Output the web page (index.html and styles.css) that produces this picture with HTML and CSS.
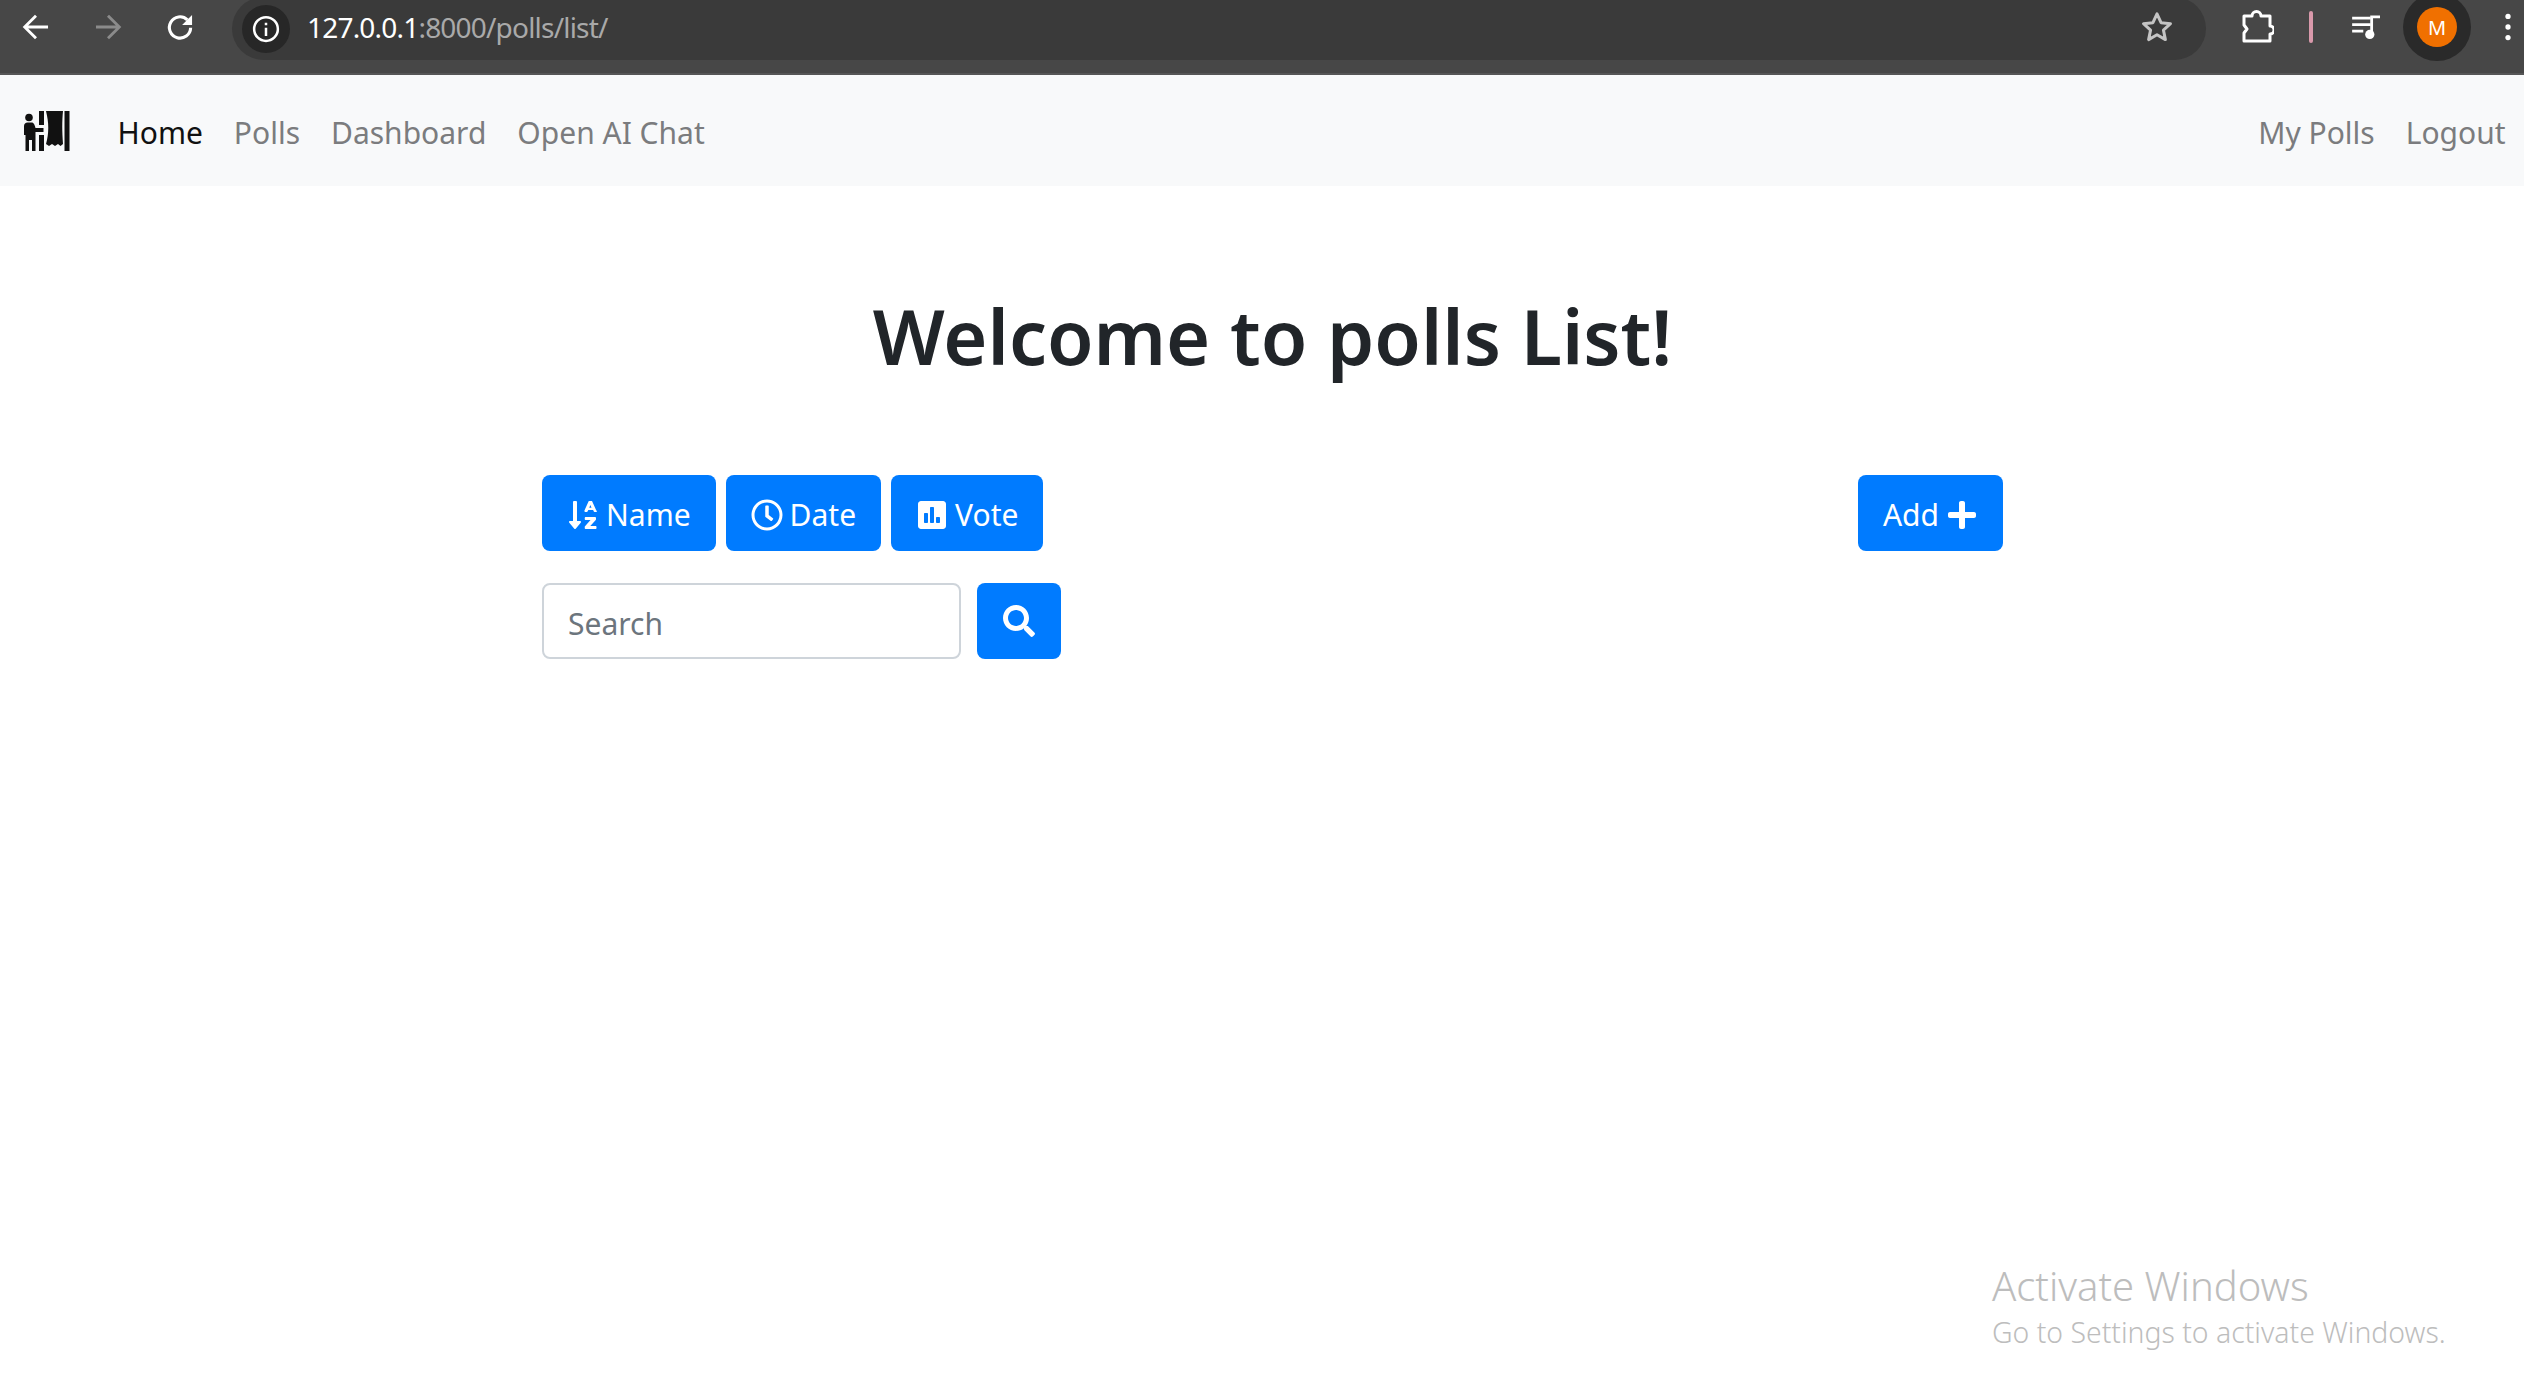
FILE: index.html
```html
<!DOCTYPE html>
<html>
<head>
	<title>Polls List</title>
	<link rel="stylesheet" href="styles.css">
</head>
<body>
	<div class="chrome">
		<div class="chrome-nav">
			<svg class="chrome-icon" viewBox="0 0 24 24"><path d="M20.500 12H4.500M12 4l-8 8 8 8" fill="none" stroke="#fff" stroke-width="2"/></svg>
			<svg class="chrome-icon" viewBox="0 0 24 24"><path d="M3.500 12h16M12 4l8 8-8 8" fill="none" stroke="#8b8b8b" stroke-width="2"/></svg>
			<svg class="chrome-icon" viewBox="0 0 24 24"><path d="M19.500 12.500a7.500 7.500 0 1 1-2.300-5.600" fill="none" stroke="#fff" stroke-width="2.200"/><path d="M20.500 3.500v7h-7z" fill="#fff"/></svg>
		</div>
		<div class="address-bar">
			<span class="site-info">
				<svg viewBox="0 0 24 24" width="30" height="30"><circle cx="12" cy="12" r="9.500" fill="none" stroke="#fff" stroke-width="2"/><path d="M11 11h2v6.500h-2zM11 7h2v2h-2z" fill="#fff"/></svg>
			</span>
			<span class="url"><span class="url-host">127.0.0.1</span>:8000/polls/list/</span>
			<svg class="star" viewBox="0 0 24 24"><path d="M12 3.200l2.700 5.900 6.300.7-4.700 4.300 1.300 6.300L12 17.200l-5.600 3.200 1.300-6.300L3 9.800l6.300-.7z" fill="none" stroke="#c4c4c4" stroke-width="2" stroke-linejoin="round"/></svg>
		</div>
		<div class="chrome-tools">
			<svg class="puzzle" viewBox="0 0 34 34"><path d="M4 6h8a4.500 4.500 0 0 1 9 0h9v10a4 4 0 0 1 0 8v7H4v-8l3-4-3-4z" fill="none" stroke="#fff" stroke-width="3" stroke-linejoin="round"/></svg>
			<span class="divider"></span>
			<svg class="queue" viewBox="0 0 34 28"><path d="M1 3h20v3H1zM1 10h20v3H1zM1 17h12v3H1z" fill="#fff"/><path d="M22 22V3h9" fill="none" stroke="#fff" stroke-width="3"/><circle cx="20" cy="22" r="5" fill="#fff"/></svg>
			<span class="avatar-ring"><span class="avatar">M</span></span>
			<svg class="dots" viewBox="0 0 8 34"><circle cx="4" cy="5" r="3" fill="#fff"/><circle cx="4" cy="17" r="3" fill="#fff"/><circle cx="4" cy="29" r="3" fill="#fff"/></svg>
		</div>
	</div>

	<nav class="navbar">
		<a class="brand" href="#">
			<svg viewBox="0 0 46 40" width="46" height="40">
				<circle cx="5" cy="6.500" r="3.800" fill="#111"/>
				<path d="M0 15c0-2 1.500-3.500 3.500-3.500h4c2 0 3 1.500 4 5.500h8v4h-8v19H8V29H5v11H1.500V24H0z" fill="#111"/>
				<path d="M15 0h5v14h-5zM15 24h5v16h-5zM40.500 0h5v40h-5z" fill="#111"/>
				<path d="M22 0h17c-1 10-1 20 0 33l-2.500 2-2.500-2-3 2-3-2-3 2-3-2c3-11 3-21 0-33z" fill="#111"/>
			</svg>
		</a>
		<div class="nav-links">
			<a class="nav-link active" href="#">Home</a>
			<a class="nav-link" href="#">Polls</a>
			<a class="nav-link" href="#">Dashboard</a>
			<a class="nav-link" href="#">Open AI Chat</a>
		</div>
		<div class="nav-links nav-right">
			<a class="nav-link" href="#">My Polls</a>
			<a class="nav-link" href="#">Logout</a>
		</div>
	</nav>

	<main class="container">
		<h1>Welcome to polls List!</h1>
		<div class="toolbar">
			<div class="sort-buttons">
				<a class="btn" href="#">
					<svg class="icon" viewBox="0 0 448 512"><path d="M176 352h-48V48a16 16 0 0 0-16-16H80a16 16 0 0 0-16 16v304H16c-14.200 0-21.400 17.200-11.300 27.300l80 96a16 16 0 0 0 22.600 0l80-96C197.400 369.300 190.200 352 176 352zM424 432H340l88-98c3-3 4-7 4-11v-19c0-8-7-16-16-16H268c-9 0-16 8-16 16v16c0 9 7 16 16 16h76l-88 98c-3 3-4 7-4 11v19c0 9 7 16 16 16h156c9 0 16-7 16-16v-16c0-9-7-16-16-16zM438 187L370 37c-3-6-8-5-14-5h-28c-6 0-11-1-14 5l-68 150c-4 10 3 21 14 21h24c7 0 13-4 15-11l9-21h78l9 21c2 7 8 11 15 11h24c11 0 18-11 14-21zM324 140l18-44 18 44z" fill="#fff" fill-rule="evenodd"/></svg>
					Name
				</a>
				<a class="btn" href="#">
					<svg class="icon" viewBox="0 0 512 512"><path d="M256 8C119 8 8 119 8 256s111 248 248 248 248-111 248-248S393 8 256 8zm0 448c-110.500 0-200-89.500-200-200S145.500 56 256 56s200 89.500 200 200-89.500 200-200 200zm61.800-104.400l-84.900-61.700c-3.100-2.300-4.900-5.900-4.900-9.700V116c0-6.600 5.400-12 12-12h32c6.600 0 12 5.400 12 12v141.700l66.800 48.600c5.400 3.900 6.500 11.400 2.600 16.800L334.600 349c-3.900 5.300-11.400 6.500-16.800 2.600z" fill="#fff"/></svg>
					Date
				</a>
				<a class="btn" href="#">
					<svg class="icon" viewBox="0 0 448 512"><path d="M400 32H48C21.500 32 0 53.500 0 80v352c0 26.500 21.500 48 48 48h352c26.500 0 48-21.500 48-48V80c0-26.500-21.500-48-48-48zM160 368c0 8.840-7.160 16-16 16h-32c-8.840 0-16-7.160-16-16V240c0-8.840 7.160-16 16-16h32c8.840 0 16 7.160 16 16v128zm96 0c0 8.840-7.160 16-16 16h-32c-8.840 0-16-7.160-16-16V144c0-8.840 7.160-16 16-16h32c8.840 0 16 7.160 16 16v224zm96 0c0 8.840-7.160 16-16 16h-32c-8.840 0-16-7.160-16-16v-64c0-8.840 7.160-16 16-16h32c8.840 0 16 7.160 16 16v64z" fill="#fff"/></svg>
					Vote
				</a>
			</div>
			<a class="btn" href="#">
				Add
				<svg class="icon" viewBox="0 0 448 512"><path d="M416 208H272V64c0-17.670-14.330-32-32-32h-32c-17.670 0-32 14.330-32 32v144H32c-17.670 0-32 14.330-32 32v32c0 17.670 14.330 32 32 32h144v144c0 17.670 14.330 32 32 32h32c17.670 0 32-14.330 32-32V304h144c17.670 0 32-14.330 32-32v-32c0-17.670-14.330-32-32-32z" fill="#fff"/></svg>
			</a>
		</div>
		<form class="search-form">
			<input class="search-input" type="text" placeholder="Search">
			<button class="btn btn-search" type="button">
				<svg class="icon" viewBox="0 0 512 512"><path d="M505 442.700L405.300 343c-4.500-4.500-10.600-7-17-7H372c27.600-35.300 44-79.700 44-128C416 93.100 322.900 0 208 0S0 93.100 0 208s93.100 208 208 208c48.300 0 92.700-16.400 128-44v16.300c0 6.400 2.500 12.500 7 17l99.700 99.700c9.400 9.400 24.600 9.400 33.900 0l28.300-28.300c9.400-9.400 9.400-24.600.1-34zM208 336c-70.700 0-128-57.200-128-128 0-70.700 57.200-128 128-128 70.700 0 128 57.200 128 128 0 70.700-57.200 128-128 128z" fill="#fff"/></svg>
			</button>
		</form>
	</main>

	<div class="activate">
		<div class="activate-title">Activate Windows</div>
		<div class="activate-sub">Go to Settings to activate Windows.</div>
	</div>
</body>
</html>
```

FILE: styles.css
```css
* {
	box-sizing: border-box;
}
html, body {
	height: 100%;
}
body {
	margin: 0;
	background: #fff;
	color: #212529;
	font-family: "Noto Sans", "Open Sans", sans-serif;
	font-size: 30px;
	overflow: hidden;
}
a {
	text-decoration: none;
}

/* browser bar */
.chrome {
	display: flex;
	align-items: flex-start;
	height: 75px;
	background: #474747;
	border-bottom: 2px solid #565656;
}
.chrome-nav {
	display: flex;
	gap: 38px;
	width: 232px;
	padding: 10px 0 0 19px;
	flex: none;
}
.chrome-icon {
	width: 34px;
	height: 34px;
}
.address-bar {
	display: flex;
	align-items: center;
	flex: none;
	width: 1974px;
	height: 63px;
	margin-top: -3px;
	padding: 0 18px 0 10px;
	background: #3a3a3a;
	border-radius: 32px;
}
.site-info {
	display: flex;
	align-items: center;
	justify-content: center;
	width: 48px;
	height: 48px;
	border-radius: 50%;
	background: #272727;
}
.url {
	margin: -3px 0 0 17px;
	font-size: 28px;
	letter-spacing: -0.8px;
	color: #a9a9a9;
}
.url-host {
	color: #fff;
}
.star {
	width: 36px;
	height: 36px;
	margin: -3px 13px 0 auto;
}
.chrome-tools {
	display: flex;
	align-items: center;
	flex: 1;
	height: 54px;
	padding-left: 34px;
}
.puzzle {
	width: 34px;
	height: 34px;
}
.divider {
	width: 4px;
	height: 32px;
	margin-left: 35px;
	background: #d999ab;
	border-radius: 2px;
}
.queue {
	width: 32px;
	height: 26px;
	margin-left: 38px;
}
.avatar-ring {
	display: flex;
	align-items: center;
	justify-content: center;
	flex: none;
	width: 68px;
	height: 68px;
	margin-left: 20px;
	border-radius: 50%;
	background: #2a2a2a;
}
.avatar {
	display: flex;
	align-items: center;
	justify-content: center;
	width: 40px;
	height: 40px;
	border-radius: 50%;
	background: #f07000;
	color: #fff;
	font-size: 20px;
}
.dots {
	width: 8px;
	height: 30px;
	margin-left: 33px;
}

/* page nav */
.navbar {
	display: flex;
	align-items: center;
	height: 111px;
	padding: 0 3px 0 24px;
	background: #f8f9fa;
}
.brand {
	display: flex;
	margin-right: 32px;
}
.nav-links {
	display: flex;
}
.nav-right {
	margin-left: auto;
}
.nav-link {
	padding: 4px 15.500px 0;
	color: #7b7c7e;
}
.nav-link.active {
	color: #111;
}

/* main */
.container {
	margin-left: 542px;
	width: 1461px;
}
h1 {
	margin: 0;
	padding-top: 100px;
	text-align: center;
	font-size: 75.600px;
	font-weight: 600;
	line-height: 100px;
}
.toolbar {
	display: flex;
	justify-content: space-between;
	margin-top: 89px;
}
.sort-buttons {
	display: flex;
	gap: 10px;
}
.btn {
	display: inline-flex;
	align-items: center;
	justify-content: center;
	gap: 7px;
	height: 76px;
	padding: 3px 25px 0;
	background: #007bff;
	border: 0;
	border-radius: 8px;
	color: #fff;
	font-family: inherit;
	font-size: 30px;
}
.icon {
	width: 32px;
	height: 32px;
}
.search-form {
	display: flex;
	gap: 16px;
	margin-top: 32px;
}
.search-input {
	width: 419px;
	height: 76px;
	padding: 4px 24px 0;
	border: 2px solid #ced4da;
	border-radius: 8px;
	font-family: inherit;
	font-size: 30px;
}
.search-input::placeholder {
	color: #6c757d;
}
.btn-search {
	width: 84px;
	padding: 0;
}

/* windows watermark */
.activate {
	position: absolute;
	left: 1992px;
	top: 1261px;
	color: #bdbdbd;
}
.activate-title {
	font-size: 40px;
	line-height: 50px;
	font-weight: 300;
}
.activate-sub {
	margin-top: 1px;
	font-size: 28.400px;
	line-height: 40px;
	font-weight: 300;
}
```
